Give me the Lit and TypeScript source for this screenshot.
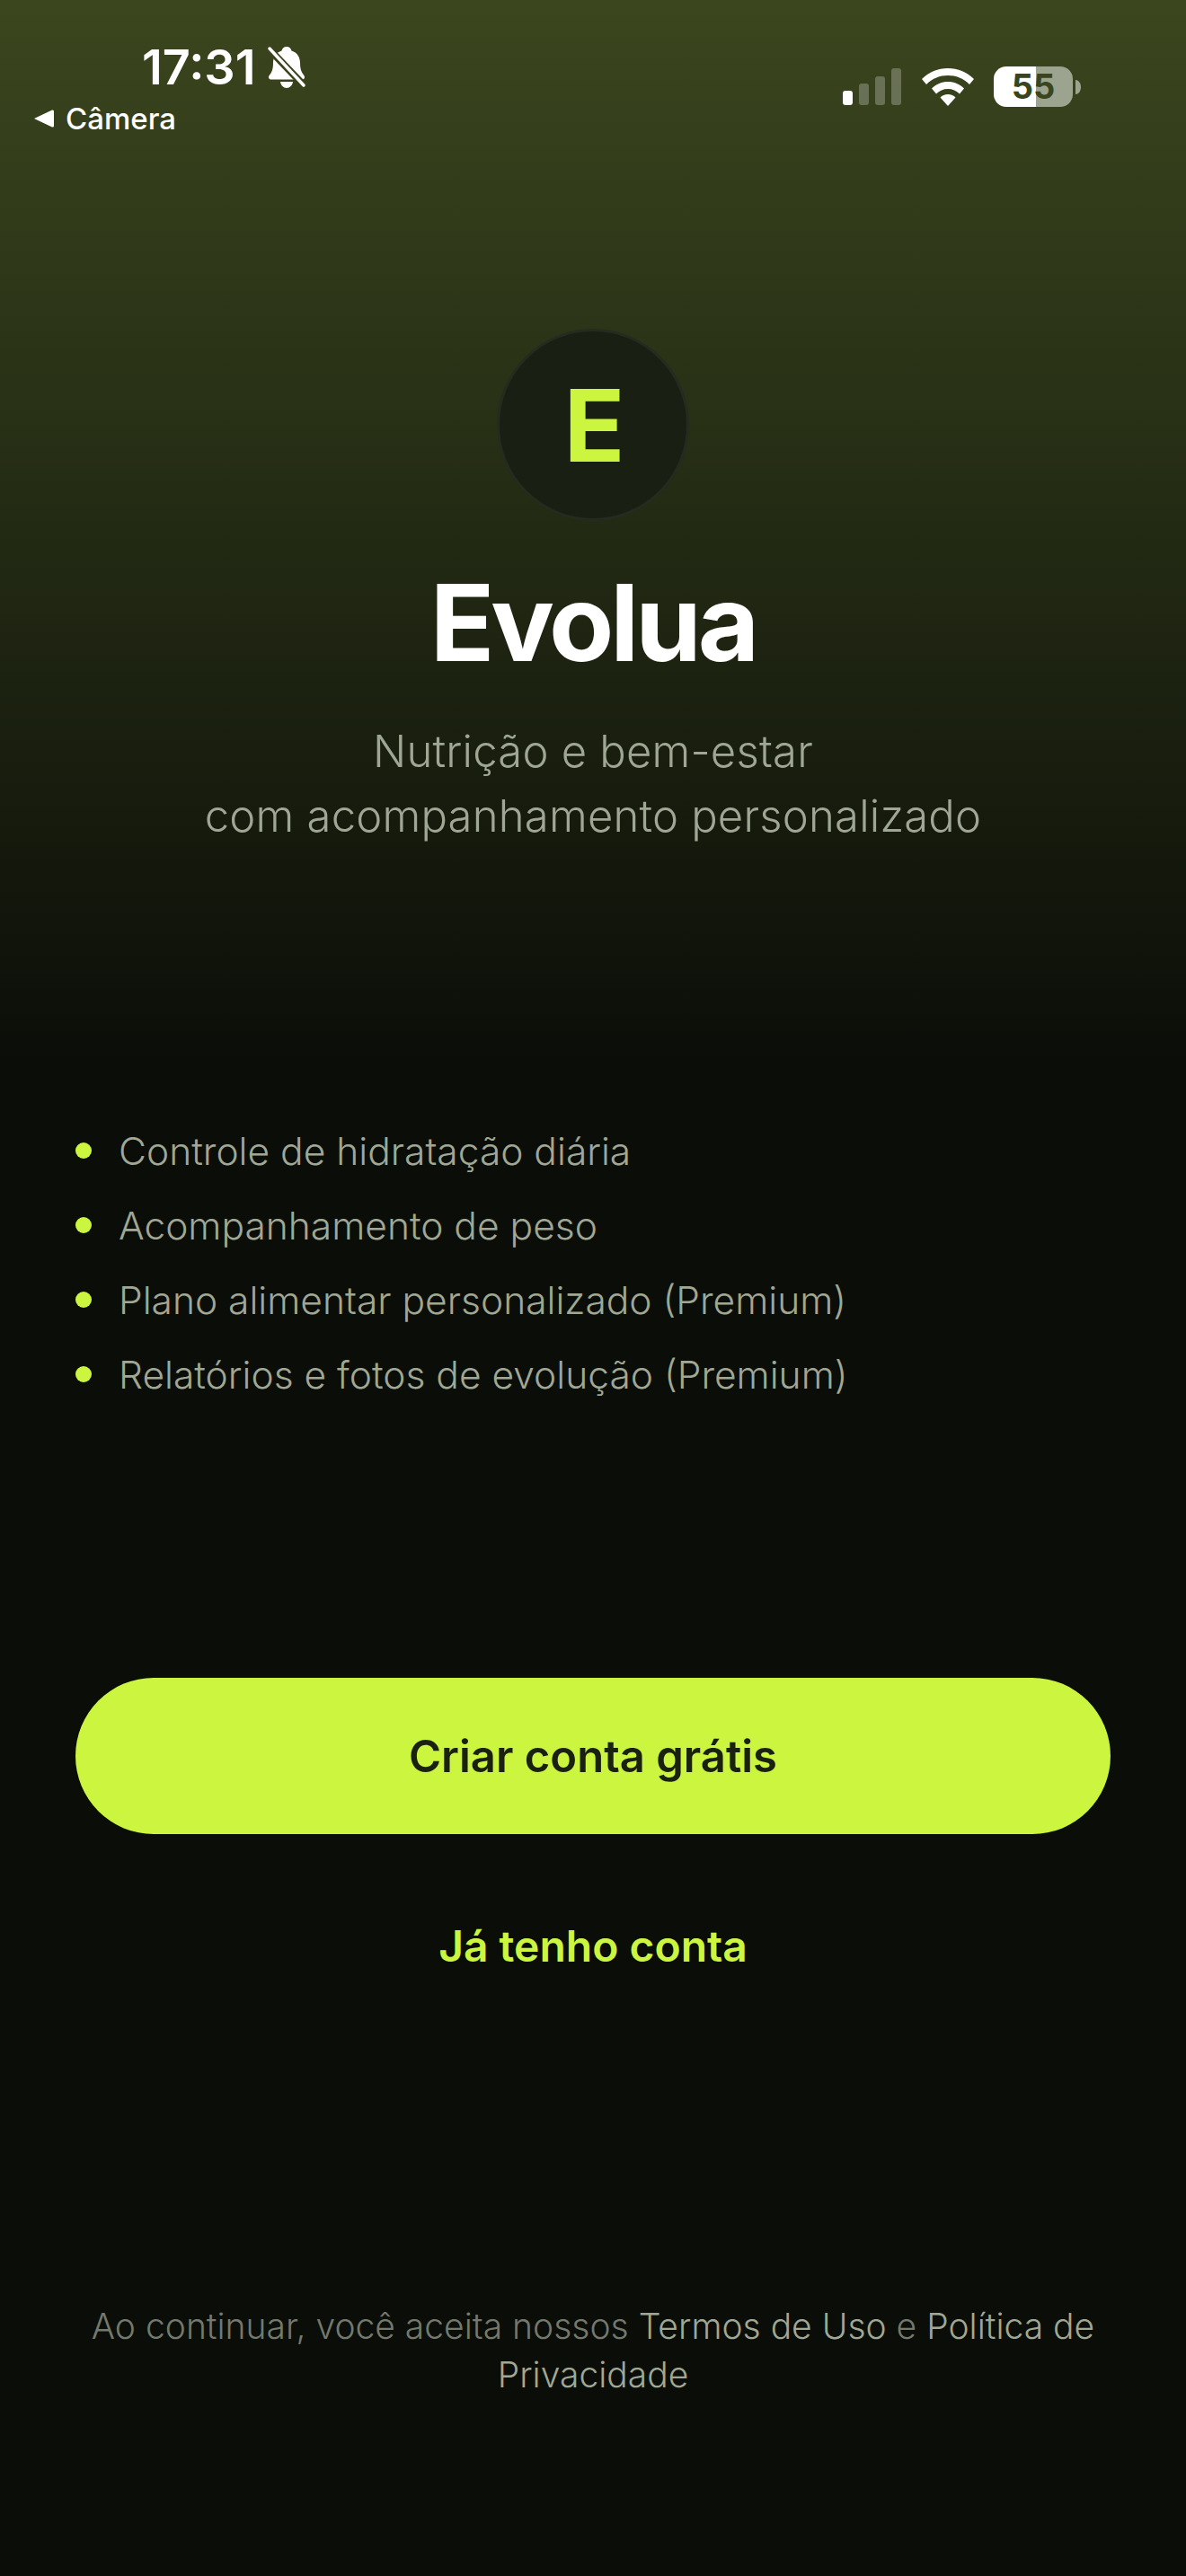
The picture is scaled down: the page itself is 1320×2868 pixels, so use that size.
import { LitElement, html, css } from 'lit';
import { customElement } from 'lit/decorators.js';

const FEATURES = [
  'Controle de hidratação diária',
  'Acompanhamento de peso',
  'Plano alimentar personalizado (Premium)',
  'Relatórios e fotos de evolução (Premium)',
];

@customElement('app-root')
export class AppRoot extends LitElement {
  static styles = css`
    :host {
      display: block;
      width: 1320px;
      height: 2868px;
      overflow: hidden;
      font-family: Inter, "Liberation Sans", sans-serif;
      background: linear-gradient(180deg, #3b461e 0, #0a0d08 1200px, #0a0d08 100%);
    }
    .status {
      height: 366px;
      box-sizing: border-box;
      display: flex;
      justify-content: space-between;
      align-items: flex-start;
      color: #fff;
    }
    .status-left {
      padding: 46px 0 0 38px;
    }
    .time-row {
      display: flex;
      align-items: center;
      gap: 12px;
      padding-left: 120px;
      height: 58px;
    }
    .time {
      font-size: 54px;
      font-weight: 600;
      line-height: 58px;
    }
    .back {
      display: flex;
      align-items: center;
      gap: 13px;
      font-size: 33px;
      font-weight: 500;
      line-height: 40px;
      margin-top: 8px;
    }
    .status-right {
      display: flex;
      align-items: center;
      gap: 22px;
      padding: 74px 117px 0 0;
    }
    .battery-wrap {
      display: flex;
      align-items: center;
      gap: 3px;
    }
    .battery {
      width: 88px;
      height: 45px;
      border-radius: 14px;
      background: linear-gradient(90deg, #fff 0, #fff 53%, #9ca38f 53%, #9ca38f 100%);
      color: #3a451e;
      font-size: 38px;
      font-weight: 700;
      line-height: 45px;
      text-align: center;
    }
    .hero {
      display: flex;
      flex-direction: column;
      align-items: center;
    }
    .logo {
      width: 214px;
      height: 214px;
      box-sizing: border-box;
      padding-left: 3px;
      border-radius: 50%;
      background: #1a1f14;
      border: 3px solid #262b20;
      color: #ccf53f;
      font-size: 112px;
      font-weight: 700;
      display: flex;
      align-items: center;
      justify-content: center;
    }
    h1 {
      margin: 38px 0 0;
      color: #fff;
      font-size: 118px;
      font-weight: 700;
      line-height: 150px;
      letter-spacing: -4px;
    }
    .tagline {
      margin: 33px 0 0;
      color: #9fa693;
      font-size: 49px;
      font-weight: 300;
      line-height: 72px;
      letter-spacing: 0.2px;
      text-align: center;
    }
    .features {
      list-style: none;
      margin: 303px 0 0;
      padding: 0 84px;
      display: flex;
      flex-direction: column;
      gap: 17px;
    }
    .features li {
      display: flex;
      align-items: center;
      gap: 30px;
      height: 66px;
      color: #a0a794;
      font-size: 42.5px;
      font-weight: 300;
    }
    .dot {
      width: 18px;
      height: 18px;
      border-radius: 50%;
      background: #ccf53f;
      flex: none;
    }
    .actions {
      margin: 305px 84px 0;
      display: flex;
      flex-direction: column;
      align-items: center;
    }
    .primary {
      width: 100%;
      height: 174px;
      border: 0;
      border-radius: 87px;
      background: #ccf53f;
      color: #1a2110;
      font: 600 49px Inter, "Liberation Sans", sans-serif;
    }
    .secondary {
      margin-top: 92px;
      border: 0;
      padding: 0;
      background: none;
      color: #ccf53f;
      font: 600 48px/66px Inter, "Liberation Sans", sans-serif;
    }
    .legal {
      margin: 363px 84px 0;
      color: #74796d;
      font-size: 39px;
      font-weight: 300;
      line-height: 54px;
      text-align: center;
    }
    .legal a {
      color: #a0a794;
      text-decoration: none;
    }
  `;

  render() {
    return html`
      <div class="status">
        <div class="status-left">
          <div class="time-row">
            <span class="time">17:31</span>
            <svg width="44" height="48" viewBox="0 0 44 48" fill="#fff">
              <path d="M22 1c3 0 5 2 5.500 4.500C34 7.500 37 13 37 19c0 6 1 10 4 13.500 2 2.500 1 5-2 5H5c-3 0-4-2.500-2-5C6 29 7 25 7 19 7 13 10 7.500 16.500 5.500 17 3 19 1 22 1z"/>
              <path d="M15 40h14c-.5 4-3.500 7-7 7s-6.500-3-7-7z"/>
              <path d="M2 3l40 42" stroke="#39441d" stroke-width="8"/>
              <path d="M3 3l38 41" stroke="#fff" stroke-width="3.500" stroke-linecap="round"/>
            </svg>
          </div>
          <div class="back">
            <svg width="22" height="20" viewBox="0 0 22 20" fill="#fff"><path d="M0 10L20 0.500q2-.5 2 1.500v16q0 2-2 1.500z"/></svg>
            <span>Câmera</span>
          </div>
        </div>
        <div class="status-right">
          <svg width="66" height="42" viewBox="0 0 66 42" fill="#fff">
            <rect x="0" y="25" width="11" height="16" rx="3"/>
            <rect x="18" y="17" width="11" height="24" rx="3" opacity=".25"/>
            <rect x="36" y="9" width="11" height="32" rx="3" opacity=".25"/>
            <rect x="54" y="0" width="11" height="41" rx="3" opacity=".25"/>
          </svg>
          <svg width="58" height="42" viewBox="0 0 58 42" fill="#fff">
            <path d="M29 0C18 0 8 4 0 12l5 6C12 11 20 8 29 8s17 3 24 10l5-6C50 4 40 0 29 0z"/>
            <path d="M29 15c-7 0-13 2.500-18 7.500l5 6c3.500-3.500 8-5.500 13-5.500s9.500 2 13 5.500l5-6C42 17.500 36 15 29 15z"/>
            <path d="M29 29c-3.500 0-6.500 1.300-8.500 3.500L29 42l8.500-9.500C35.500 30.300 32.500 29 29 29z"/>
          </svg>
          <div class="battery-wrap">
            <div class="battery">55</div>
            <svg width="6" height="16" viewBox="0 0 6 16" fill="#9ca38f"><path d="M0 0c3 0 6 3 6 8s-3 8-6 8z"/></svg>
          </div>
        </div>
      </div>

      <div class="hero">
        <div class="logo">E</div>
        <h1>Evolua</h1>
        <p class="tagline">Nutrição e bem-estar<br />com acompanhamento personalizado</p>
      </div>

      <ul class="features">
        ${FEATURES.map((f) => html`<li><span class="dot"></span><span>${f}</span></li>`)}
      </ul>

      <div class="actions">
        <button class="primary">Criar conta grátis</button>
        <button class="secondary">Já tenho conta</button>
      </div>

      <p class="legal">Ao continuar, você aceita nossos <a>Termos de Uso</a> e <a>Política de</a> <a>Privacidade</a></p>
    `;
  }
}
